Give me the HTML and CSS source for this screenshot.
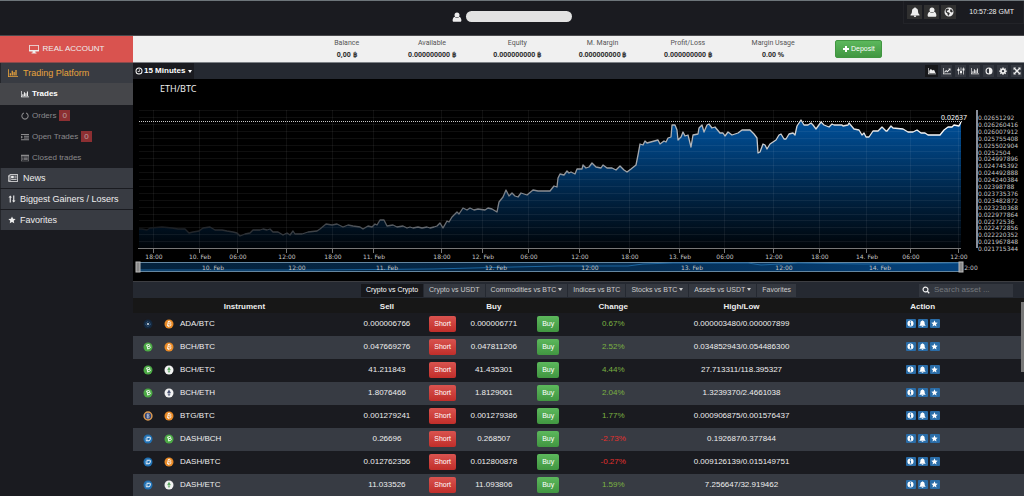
FILE: index.html
```html
<!DOCTYPE html>
<html lang="en">
<head>
  <meta charset="UTF-8">
  <meta name="viewport" content="width=device-width, initial-scale=1">
  <title>Trading Platform</title>
  <link rel="stylesheet" href="styles.css">
</head>
<body>
  <!-- Icons -->
  <svg class="sprite" aria-hidden="true">
    <symbol id="i-user" viewBox="0 0 16 16"><circle cx="8" cy="4.6" r="4"/><path d="M4.3 7.6C2 8.6 1 10.500 1 13.500c0 1.300.8 2 2 2h10c1.200 0 2-.7 2-2 0-3-1-4.900-3.300-5.900a5 5 0 0 1-7.400 0z"/></symbol>
    <symbol id="i-bell" viewBox="0 0 16 16"><path d="M8 .5c.7 0 1.100.5 1.100 1.200 2.400.5 3.700 2.400 3.700 4.800 0 3.400.9 4.700 2.400 6v.9H.8v-.9c1.500-1.300 2.400-2.600 2.400-6 0-2.400 1.300-4.300 3.700-4.800C6.900 1 7.300.5 8 .5zM6 14h4a2 2 0 0 1-4 0z"/></symbol>
    <symbol id="i-globe" viewBox="0 0 16 16"><path fill-rule="evenodd" d="M8 .8a7.200 7.200 0 1 0 0 14.400A7.200 7.200 0 0 0 8 .8zM3 3.600l3-1.300 2 .7-1 2-2.500 1 .6 1.800 3 .8 1.200 1.800-2 3.400-1.300-.5-.5-3-2.600-2L2.500 5zM10.500 3l2.300 1.200 1.300 3.300-1.600 1.300-2.400-1.300-.4-2z"/></symbol>
    <symbol id="i-desktop" viewBox="0 0 16 16"><path fill-rule="evenodd" d="M1 1.500h14c.6 0 1 .4 1 1v8.500c0 .6-.4 1-1 1h-5l.5 2H12v1H4v-1h1.500l.5-2H1c-.6 0-1-.4-1-1V2.500c0-.6.4-1 1-1zm.3 1.300v6.700h13.400V2.800z"/></symbol>
    <symbol id="i-bars" viewBox="0 0 16 16"><path d="M0 2h1.300v11H16v1.300H0zM2.800 8.500h2V12h-2zM5.800 4.500h2V12h-2zM8.800 6.500h2V12h-2zM11.800 3h2v9h-2z"/></symbol>
    <symbol id="i-area" viewBox="0 0 16 16"><path d="M0 2h1.300v11H16v1.300H0zM2.500 12V7.500L5.500 4l4 3 2.500-1.500 3 6.500z"/></symbol>
    <symbol id="i-line" viewBox="0 0 16 16"><path d="M0 2h1.300v11H16v1.300H0zM2.300 9.800l4-4 2.300 2.200 3.400-3.500-1.300-1.300H15v4.300l-1.400-1.300L8.600 11 6.300 8.700l-2.600 2.600z"/></symbol>
    <symbol id="i-candles" viewBox="0 0 16 16"><path d="M2.300 1h1.400v3H5v4H3.700v7H2.300V8H1V4h1.300zM7.300 1h1.400v7H10v4H8.700v3H7.300v-3H6V8h1.300zM12.300 1h1.400v2H15v4h-1.300v8h-1.400V7H11V3h1.300z"/></symbol>
    <symbol id="i-adjust" viewBox="0 0 16 16"><path fill-rule="evenodd" d="M8 1a7 7 0 1 0 0 14A7 7 0 0 0 8 1zm0 2.200v9.600a4.800 4.800 0 0 1 0-9.600z"/></symbol>
    <symbol id="i-gear" viewBox="0 0 16 16"><path fill-rule="evenodd" d="M6.800 1h2.400l.4 2 1.200.5 1.700-1.200 1.700 1.700L13 5.700l.5 1.100 2 .4v2.200l-2 .4-.5 1.200 1.200 1.700-1.700 1.700-1.700-1.200-1.200.5-.4 2H6.800l-.4-2-1.200-.5-1.700 1.200-1.700-1.700L3 11l-.5-1.200-2-.4V7.200l2-.4L3 5.700 1.800 4l1.700-1.700 1.700 1.200L6.400 3zM8 5.800a2.400 2.400 0 1 0 0 4.800 2.400 2.400 0 0 0 0-4.800z"/></symbol>
    <symbol id="i-expand" viewBox="0 0 16 16"><path d="M1 1h5L4.500 2.500 8 6l3.500-3.500L10 1h5v5l-1.500-1.500L10 8l3.500 3.500L15 10v5h-5l1.500-1.500L8 10l-3.500 3.500L6 15H1v-5l1.500 1.500L6 8 2.500 4.500 1 6z"/></symbol>
    <symbol id="i-notch" viewBox="0 0 16 16"><path d="M6 1v2.200a5.200 5.200 0 1 0 4 0V1a7.300 7.300 0 1 1-4 0z"/></symbol>
    <symbol id="i-indent" viewBox="0 0 16 16"><path d="M0 2h16v2H0zM6 5.500h10v2H6zM6 9h10v2H6zM0 12.500h16v2H0zM0 5l4 3.200-4 3.300z"/></symbol>
    <symbol id="i-list" viewBox="0 0 16 16"><path fill-rule="evenodd" d="M0 1.500h16v13H0zM1.200 4.500v8.800h13.600V4.500zM2.500 5.500H4v1.500H2.500zM5 5.500h8.500v1.500H5zM2.500 8H4v1.500H2.500zM5 8h8.500v1.500H5zM2.500 10.500H4V12H2.500zM5 10.500h8.500V12H5z"/></symbol>
    <symbol id="i-news" viewBox="0 0 16 16"><path fill-rule="evenodd" d="M2.500 2H16v12H1.500C.6 14 0 13.400 0 12.500V4h2.500zM1 5v7.300h1.500V5zM3.800 3.300v9.400h11V3.300zM5 4.500h4.200v4H5zM10.200 4.500h3.600v1.200h-3.600zM10.200 7.200h3.600v1.200h-3.600zM5 10h8.800v1.300H5z"/></symbol>
    <symbol id="i-updown" viewBox="0 0 16 16"><path d="M4.500 1L8 5H5.600v10H3.400V5H1zM10.400 1h2.200v10H15l-3.500 4L8 11h2.400z"/></symbol>
    <symbol id="i-star" viewBox="0 0 16 16"><path d="M8 .8l2.200 4.700 5.100.6-3.800 3.500 1 5.100L8 12.200l-4.500 2.500 1-5.100L.7 6.100l5.100-.6z"/></symbol>
    <symbol id="i-clock" viewBox="0 0 16 16"><path fill-rule="evenodd" d="M8 1a7 7 0 1 0 0 14A7 7 0 0 0 8 1zm0 2a5 5 0 1 1 0 10A5 5 0 0 1 8 3zm-.2 1.500h1.500v4.800H5.500V7.800h2.300z"/></symbol>
    <symbol id="i-plus" viewBox="0 0 16 16"><path d="M6 2h4v4h4v4h-4v4H6v-4H2V6h4z"/></symbol>
    <symbol id="i-search" viewBox="0 0 16 16"><path fill-rule="evenodd" d="M7 1a6 6 0 1 0 3.300 11l3.200 3.300 1.900-1.900-3.300-3.200A6 6 0 0 0 7 1zm0 2.300a3.700 3.700 0 1 1 0 7.400 3.700 3.700 0 0 1 0-7.400z"/></symbol>
    <symbol id="i-info" viewBox="0 0 16 16"><path fill-rule="evenodd" d="M8 1a7 7 0 1 0 0 14A7 7 0 0 0 8 1zM6.900 3h2.300v2H6.900zM6 6.300h3.200v4.900H10v1.500H6v-1.500h.9V7.800H6z"/></symbol>
    <!-- Coins -->
    <symbol id="c-ada" viewBox="0 0 20 20"><circle cx="10" cy="10" r="9" fill="#14283f"/><circle cx="10" cy="10" r="4.500" fill="none" stroke="#3d6c9c" stroke-width="2" stroke-dasharray="2 1.500"/><circle cx="10" cy="10" r="2.200" fill="#c9d6e2"/></symbol>
    <symbol id="c-btc" viewBox="0 0 20 20"><circle cx="10" cy="10" r="9" fill="#e98a26"/><path d="M8 5l4.500 1c2 .6 1.800 3.200.3 3.700 1.600.8 1.400 4.300-1.300 4.300L6.500 13M8.700 5l-1.900 8.500M8.300 9.300l4 .6M10.500 3.500l-.4 2M9 13.500l-.4 2.300" fill="none" stroke="#fff" stroke-width="1.700"/></symbol>
    <symbol id="c-bch" viewBox="0 0 20 20"><circle cx="10" cy="10" r="9" fill="#4caa45"/><path d="M6.500 6.500L11 5c2.300-.5 3 2 1.600 3.500 2.300-.2 2.900 3 .6 4.200L8.700 14M7.500 6l2.200 8M8.700 9.800l4-1.200" fill="none" stroke="#fff" stroke-width="1.800"/></symbol>
    <symbol id="c-etc" viewBox="0 0 20 20"><circle cx="10" cy="10" r="9" fill="#f2f2f2"/><path d="M10 3.500l3.500 6-3.500 2-3.500-2zM6.800 11.200l3.200 2 3.200-2-3.200 5z" fill="#5aa55f"/></symbol>
    <symbol id="c-eth" viewBox="0 0 20 20"><circle cx="10" cy="10" r="9" fill="#f2f2f2"/><path d="M10 3l3.800 6.600-3.800 2.100-3.800-2.100zM6.500 11.200l3.500 2 3.500-2-3.500 5.300z" fill="#4b5575"/></symbol>
    <symbol id="c-btg" viewBox="0 0 20 20"><circle cx="10" cy="10" r="7.800" fill="#2d4378" stroke="#dc9a4f" stroke-width="3"/><path d="M8.500 6h2c2 0 2.100 3 .4 3.700 2.200.5 1.900 4.300-.5 4.300H8.500V6M8.500 9.800h2.500" fill="none" stroke="#d9dbe3" stroke-width="1.500"/></symbol>
    <symbol id="c-dash" viewBox="0 0 20 20"><circle cx="10" cy="10" r="9" fill="#2071b4"/><path d="M7 6.500h6.500c1.200 0 1.400.8 1.200 1.700l-.8 3.600c-.3 1.200-.9 1.700-2 1.700H5.500M5 10h4.500" fill="none" stroke="#fff" stroke-width="2"/></symbol>
  </svg>

  <header class="topbar">
    <div class="account">
      <svg class="icon icon-lg"><use href="#i-user"/></svg>
      <span class="account-name"></span>
    </div>
    <div class="topbar-tools">
      <button class="tool-btn" aria-label="Alerts"><svg class="icon icon-lg"><use href="#i-bell"/></svg></button>
      <button class="tool-btn" aria-label="Profile"><svg class="icon icon-lg"><use href="#i-user"/></svg></button>
      <button class="tool-btn" aria-label="Language"><svg class="icon icon-lg"><use href="#i-globe"/></svg></button>
      <span class="clock">10:57:28 GMT</span>
    </div>
  </header>

  <div class="layout">
    <nav class="sidebar">
      <a class="real-account" href="#"><svg class="icon icon-lg"><use href="#i-desktop"/></svg>REAL ACCOUNT</a>
      <a class="menu-item current" href="#"><svg class="icon icon-lg"><use href="#i-bars"/></svg>Trading Platform</a>
      <div class="submenu">
        <a class="active" href="#"><svg class="icon"><use href="#i-bars"/></svg>Trades</a>
        <a href="#"><svg class="icon"><use href="#i-notch"/></svg>Orders <span class="badge">0</span></a>
        <a href="#"><svg class="icon"><use href="#i-indent"/></svg>Open Trades <span class="badge">0</span></a>
        <a href="#"><svg class="icon"><use href="#i-list"/></svg>Closed trades</a>
      </div>
      <a class="menu-item" href="#"><svg class="icon icon-lg"><use href="#i-news"/></svg>News</a>
      <a class="menu-item tight" href="#"><svg class="icon"><use href="#i-updown"/></svg>Biggest Gainers / Losers</a>
      <a class="menu-item tight" href="#"><svg class="icon"><use href="#i-star"/></svg>Favorites</a>
    </nav>

    <main class="content">
      <section class="stats">
        <div class="stats-grid">
          <div class="stat"><span>Balance</span><b>0,00 ฿</b></div>
          <div class="stat"><span>Available</span><b>0.000000000 ฿</b></div>
          <div class="stat"><span>Equity</span><b>0.000000000 ฿</b></div>
          <div class="stat"><span>M. Margin</span><b>0.000000000 ฿</b></div>
          <div class="stat"><span>Profit/Loss</span><b>0.000000000 ฿</b></div>
          <div class="stat"><span>Margin Usage</span><b>0.00 %</b></div>
          <div class="stat"><button class="deposit"><svg class="icon"><use href="#i-plus"/></svg>Deposit</button></div>
        </div>
      </section>

      <div class="chart-bar">
        <button class="interval"><svg class="icon"><use href="#i-clock"/></svg>15 Minutes<i class="caret"></i></button>
        <div class="chart-tools">
          <button class="active" aria-label="Area"><svg class="icon"><use href="#i-area"/></svg></button>
          <button aria-label="Line"><svg class="icon"><use href="#i-line"/></svg></button>
          <button aria-label="Candles"><svg class="icon"><use href="#i-candles"/></svg></button>
          <button aria-label="Bars"><svg class="icon"><use href="#i-bars"/></svg></button>
          <button aria-label="Theme"><svg class="icon"><use href="#i-adjust"/></svg></button>
          <button aria-label="Settings"><svg class="icon"><use href="#i-gear"/></svg></button>
          <button aria-label="Full screen"><svg class="icon"><use href="#i-expand"/></svg></button>
        </div>
      </div>

      <svg class="chart" viewBox="0 0 891 202">
        <defs>
          <linearGradient id="fill" gradientUnits="userSpaceOnUse" x1="0" y1="42" x2="0" y2="169">
            <stop offset="0" stop-color="#00509a"/>
            <stop offset="1" stop-color="#000408"/>
          </linearGradient>
          <linearGradient id="stroke" gradientUnits="userSpaceOnUse" x1="6" y1="0" x2="828" y2="0">
            <stop offset="0" stop-color="#14181d"/>
            <stop offset=".2" stop-color="#3c4045"/>
            <stop offset=".5" stop-color="#8c9096"/>
            <stop offset="1" stop-color="#fff"/>
          </linearGradient>
          <linearGradient id="nav" x1="0" y1="0" x2="1" y2="0">
            <stop offset="0" stop-color="#04223d"/>
            <stop offset=".5" stop-color="#052848"/>
            <stop offset="1" stop-color="#04427c"/>
          </linearGradient>
        </defs>
        <text class="chart-title" x="27" y="13">ETH/BTC</text>
        <path class="area" id="area"/>
        <path class="grid" id="grid"/>
        <path class="line" id="line"/>
        <path class="price-line" d="M6 42.500H829"/>
        <text class="price-label" x="834" y="41" text-anchor="end">0.02637</text>
        <path class="axis" d="M5 169.500H828"/>
        <path class="axis-y" d="M844 31V169"/>
        <g id="ticks"></g>
        <g id="prices"></g>
        <!-- Navigator -->
        <rect x="5" y="183.500" width="823" height="9" fill="url(#nav)" stroke="#6486a0"/>
        <path class="nav-line" d="M5 191L180 191 300 190 380 188 425 187 495 187 510 185 540 184 615 184 628 186 665 184 730 185 828 184"/>
        <g id="nav-labels"></g>
        <rect class="handle" x="3" y="183" width="4" height="10"/>
        <rect class="handle" x="826" y="183" width="4" height="10"/>
      </svg>

      <section class="market">
        <div class="market-bar">
          <div class="tabs">
            <button class="active">Crypto vs Crypto</button>
            <button>Crypto vs USDT</button>
            <button>Commodities vs BTC<i class="caret"></i></button>
            <button>Indices vs BTC</button>
            <button>Stocks vs BTC<i class="caret"></i></button>
            <button>Assets vs USDT<i class="caret"></i></button>
            <button>Favorites</button>
          </div>
          <label class="search">
            <svg class="icon"><use href="#i-search"/></svg>
            <input type="text" placeholder="Search asset ..." aria-label="Search asset">
          </label>
        </div>
        <div class="table-wrap">
          <table class="assets">
            <colgroup>
              <col class="w-name"><col class="w-sell"><col class="w-short"><col class="w-price">
              <col class="w-buy"><col class="w-change"><col class="w-range"><col>
            </colgroup>
            <thead>
              <tr><th>Instrument</th><th>Sell</th><th></th><th>Buy</th><th></th><th>Change</th><th>High/Low</th><th>Action</th></tr>
            </thead>
            <tbody id="rows"></tbody>
          </table>
          <div class="scroll-thumb"></div>
        </div>
      </section>
    </main>
  </div>

  <script src="app.js"></script>
</body>
</html>
```

FILE: styles.css
```css
* {
  box-sizing: border-box;
}

body {
  margin: 0;
  height: 100vh;
  display: flex;
  flex-direction: column;
  overflow: hidden;
  background: #1a1b20;
  color: #eee;
  font-family: "Liberation Sans", Arial, sans-serif;
  font-size: 8px;
  line-height: 10px;
}

a {
  color: inherit;
  text-decoration: none;
}

button,
input {
  margin: 0;
  padding: 0;
  border: 0;
  color: inherit;
  font: inherit;
}

.sprite {
  position: absolute;
  width: 0;
  height: 0;
}

.icon {
  width: 8px;
  height: 8px;
  fill: currentColor;
  flex: none;
}

.icon-lg {
  width: 10px;
  height: 10px;
}

.caret {
  display: inline-block;
  margin-left: 2px;
  border: 2px solid transparent;
  border-top: 3px solid currentColor;
  border-bottom: 0;
}

/* Header */
.topbar {
  display: grid;
  grid-template-columns: 1fr auto 1fr;
  height: 36px;
  border-top: 1px solid #6d757a;
  border-bottom: 1px solid #4a4a4d;
}

.account {
  grid-column: 2;
  display: flex;
  align-items: center;
  gap: 4px;
  padding-bottom: 3px;
}

.account-name {
  width: 106px;
  height: 11px;
  border-radius: 6px;
  background: #e2e2e2;
}

.topbar-tools {
  justify-self: end;
  display: flex;
  align-items: center;
  gap: 2px;
  height: 23px;
  padding: 0 9px 0 3px;
  border: 1px solid #222328;
  border-top: 0;
}

.tool-btn {
  display: flex;
  align-items: center;
  justify-content: center;
  width: 15px;
  height: 14px;
  background: #303030;
}

.clock {
  margin-left: 11px;
  font-size: 7px;
}

.layout {
  flex: 1;
  display: flex;
  min-height: 0;
}

/* Sidebar */
.sidebar {
  width: 133px;
  flex: none;
}

.real-account {
  display: flex;
  align-items: center;
  justify-content: center;
  gap: 4px;
  height: 27px;
  background: #d9534f;
  border-bottom: 1px solid #8a4a4c;
}

.menu-item {
  display: flex;
  align-items: center;
  gap: 5px;
  height: 20px;
  margin-bottom: 1px;
  padding-left: 7px;
  background: #383b42;
  border-left: 1px solid #24262b;
  font-size: 9px;
}

.menu-item.tight {
  gap: 4px;
}

.menu-item.current {
  margin-bottom: 0;
  color: #e8a33d;
}

.submenu a {
  display: flex;
  align-items: center;
  gap: 3px;
  height: 21px;
  padding-left: 21px;
  color: #8a8a8c;
}

.submenu a.active {
  height: 22px;
  background: #45464a;
  color: #fff;
  font-weight: bold;
}

.badge {
  padding: 0 3px;
  background: #8c2f32;
  color: #b9a0a0;
  line-height: 11px;
}

.content {
  flex: 1;
  min-width: 0;
  display: flex;
  flex-direction: column;
}

/* Account stats */
.stats {
  height: 27px;
  flex: none;
  background: #f0f0f0;
  border-bottom: 1px solid #7d8186;
  color: #555;
}

.stats-grid {
  display: grid;
  grid-template-columns: repeat(7, 1fr);
  width: 67%;
  height: 25px;
  margin-left: 19.2%;
}

.stat {
  display: flex;
  flex-direction: column;
  align-items: center;
  justify-content: center;
  gap: 2px;
  white-space: nowrap;
  font-family: Roboto, sans-serif;
  font-size: 7px;
}

.stat b {
  color: #333;
  font-family: "Noto Sans", sans-serif;
}

.deposit {
  display: flex;
  align-items: center;
  gap: 1px;
  height: 18px;
  padding: 0 6px;
  border: 1px solid #419641;
  border-radius: 2px;
  background: linear-gradient(#5cb85c, #419641);
  color: #fff;
  font-family: "Liberation Sans", Arial, sans-serif;
}

/* Chart */
.chart-bar {
  display: flex;
  justify-content: space-between;
  height: 16px;
  flex: none;
  padding-right: 2px;
  background: #252931;
}

.interval {
  display: flex;
  align-items: center;
  gap: 1px;
  padding: 0 2px;
  background: #1a1b20;
  color: #fff;
  font-weight: bold;
}

.chart-tools {
  display: flex;
  align-items: center;
  gap: 3px;
}

.chart-tools button {
  display: flex;
  align-items: center;
  justify-content: center;
  width: 11px;
  height: 12px;
  background: #33373f;
}

.chart-tools .active {
  width: 13px;
  background: #17181b;
}

.chart {
  display: block;
  width: 100%;
  height: auto;
  flex: none;
  background: #000;
  font-family: "DejaVu Sans", sans-serif;
  font-size: 6px;
  fill: #c4c4c4;
}

.chart-title {
  fill: #eee;
  font-family: "Noto Sans", sans-serif;
  font-size: 9px;
}

.area {
  fill: url(#fill);
}

.grid {
  fill: none;
  stroke: rgba(255, 255, 255, 0.06);
}

.line {
  fill: none;
  stroke: url(#stroke);
  stroke-width: 1.3;
  stroke-linejoin: round;
}

.price-line {
  stroke: #c8c8c8;
  stroke-dasharray: 1 1;
}

.price-label {
  fill: #fff;
  font-family: "Noto Sans", sans-serif;
  font-size: 7px;
}

.axis {
  stroke: #777;
}

.axis-y {
  stroke: #8a8f9a;
  stroke-width: 2;
}

.nav-line {
  fill: none;
  stroke: #1c659f;
}

.handle {
  fill: #888;
  stroke: #bbb;
}

/* Market */
.market {
  flex: 1;
  min-height: 0;
  display: flex;
  flex-direction: column;
}

.market-bar {
  display: grid;
  grid-template-columns: 1fr auto 1fr;
  align-items: center;
  height: 17px;
  flex: none;
  padding-right: 11px;
  padding-left: 11px;
  background: #252931;
  border-top: 1px solid #3d3e42;
}

.tabs {
  grid-column: 2;
  display: flex;
  gap: 1px;
}

.tabs button {
  height: 13px;
  padding: 0 5px;
  background: #343840;
  color: #ccc;
  font-size: 7px;
  white-space: nowrap;
}

.tabs .caret {
  vertical-align: 1px;
}

.tabs .active {
  background: #17181c;
  color: #fff;
}

.search {
  justify-self: end;
  display: flex;
  align-items: center;
  gap: 4px;
  width: 94px;
  height: 13px;
  padding-left: 3px;
  background: #33373f;
}

.search input {
  width: 100%;
  min-width: 0;
  background: none;
  outline: none;
}

.search input::placeholder {
  color: #74777d;
}

.table-wrap {
  position: relative;
  flex: 1;
  min-height: 0;
  overflow: hidden;
}

.assets {
  width: 100%;
  table-layout: fixed;
  border-collapse: collapse;
  text-align: center;
}

.w-name { width: 25%; }
.w-sell { width: 7%; }
.w-short { width: 5.5%; }
.w-price { width: 6%; }
.w-buy { width: 6.2%; }
.w-change { width: 8.4%; }
.w-range { width: 20.4%; }

.assets th {
  height: 15px;
  padding: 2px 0 0;
  background: #171717;
}

.assets td {
  height: 23px;
  padding: 0 0 2px;
}

.assets tr > :last-child {
  padding-right: 11px;
}

.assets tbody tr:nth-child(even) {
  background: #373b43;
}

.pair {
  display: flex;
  align-items: center;
  gap: 6px;
  padding-left: 10px;
}

.coin {
  width: 10px;
  height: 10px;
}

.coin:first-child {
  margin-right: 5px;
}

.up {
  color: #7bb342;
}

.down {
  color: #e5302d;
}

.trade {
  height: 16px;
  padding: 0 5px;
  border-radius: 2px;
  color: #fff;
  font-size: 7px;
}

.trade.short {
  background: linear-gradient(#d9534f, #c12e2a);
}

.trade.buy {
  background: linear-gradient(#5cb85c, #419641);
}

.actions {
  display: flex;
  justify-content: center;
  gap: 2px;
}

.actions button {
  display: flex;
  align-items: center;
  justify-content: center;
  width: 10px;
  height: 9px;
  border-radius: 1px;
  background: #2a6da8;
  color: #fff;
}

.actions .icon {
  width: 7px;
  height: 7px;
}

.scroll-thumb {
  position: absolute;
  top: 4px;
  right: 0;
  width: 3px;
  height: 70px;
  background: #777;
}
```

FILE: app.js
```js
const ASSETS = [
  ['ADA', 'BTC', '0.000006766', '0.000006771', '0.67%', '0.000003480/0.000007899'],
  ['BCH', 'BTC', '0.047669276', '0.047811206', '2.52%', '0.034852943/0.054486300'],
  ['BCH', 'ETC', '41.211843', '41.435301', '4.44%', '27.713311/118.395327'],
  ['BCH', 'ETH', '1.8076466', '1.8129061', '2.04%', '1.3239370/2.4661038'],
  ['BTG', 'BTC', '0.001279241', '0.001279386', '1.77%', '0.000906875/0.001576437'],
  ['DASH', 'BCH', '0.26696', '0.268507', '-2.73%', '0.192687/0.377844'],
  ['DASH', 'BTC', '0.012762356', '0.012800878', '-0.27%', '0.009126139/0.015149751'],
  ['DASH', 'ETC', '11.033526', '11.093806', '1.59%', '7.256647/32.919462']
];

const PRICES = [
  '0.02651292', '0.026260416', '0.026007912', '0.025755408', '0.025502904',
  '0.0252504', '0.024997896', '0.024745392', '0.024492888', '0.024240384',
  '0.02398788', '0.023735376', '0.023482872', '0.023230368', '0.022977864',
  '0.02272536', '0.022472856', '0.022220352', '0.021967848', '0.021715344'
];

const TICKS = [
  [20, '18:00'], [66, '10. Feb'], [104, '06:00'], [153, '12:00'], [199, '18:00'],
  [240, '11. Feb'], [308, '18:00'], [349, '12. Feb'], [395, '06:00'], [446, '12:00'],
  [496, '18:00'], [546, '13. Feb'], [591, '06:00'], [640, '12:00'], [686, '18:00'],
  [733, '14. Feb'], [777, '06:00'], [825, '12:00']
];

const NAV_TICKS = [
  [80, '10. Feb'], [164, '12:00'], [254, '11. Feb'], [363, '12. Feb'], [457, '12:00'],
  [559, '13. Feb'], [651, '12:00'], [747, '14. Feb'], [838, '2:00']
];

const SERIES = `6,150 9,150 14,151 17,149 29,148 39,149 45,150 52,150 56,154 60,153 66,152 70,149 77,148
82,151 89,151 94,152 100,153 104,154 107,157 112,155 117,154 120,151 127,151 130,150 134,151 137,150
140,153 145,153 150,156 154,154 157,156 160,152 162,155 169,155 175,153 184,152 187,150 193,145 199,146
204,145 210,148 215,146 220,147 227,148 230,150 235,147 239,148 242,145 244,146 247,141 251,141 254,147
260,146 264,148 270,147 274,149 277,148 280,149 285,148 289,149 294,148 297,149 301,148 304,147 307,144
310,149 314,142 316,143 319,138 324,133 326,135 330,129 334,131 337,129 341,131 345,130 352,131 355,129
359,130 364,133 366,123 370,118 373,111 376,117 379,114 382,117 385,118 388,114 394,116 400,111 405,112
417,112 421,107 424,108 425,99 427,95 431,96 434,92 436,94 438,93 442,95 444,90 449,90 450,86 453,89
456,88 459,84 463,88 468,89 470,86 474,89 479,89 483,91 487,87 491,91 494,93 498,90 503,86 505,76 507,65
510,66 512,62 514,64 525,61 527,65 531,62 533,63 535,59 538,58 539,46 542,46 544,51 545,61 548,58 550,53
552,57 555,56 558,68 560,56 565,55 566,49 569,46 571,53 574,46 576,45 579,49 582,48 587,54 590,54 592,57
595,53 599,56 605,54 609,51 617,51 621,55 624,59 625,74 627,73 630,65 632,66 634,70 637,65 643,61 646,56
648,55 651,60 653,60 656,55 660,54 662,56 664,47 668,41 671,46 675,46 678,44 680,46 683,50 688,43 691,46
696,48 699,45 701,46 709,46 710,47 715,46 716,44 721,50 726,51 729,56 731,54 733,58 736,58 740,52 745,52
749,48 750,49 753,52 754,52 758,47 760,49 770,50 775,53 780,53 784,51 788,54 792,54 795,56 807,56 811,51
815,48 819,48 821,46 826,47 828,43`;

const byId = id => document.getElementById(id);
const icon = name => `<svg class="icon"><use href="#i-${name}"/></svg>`;
const coin = name => `<svg class="coin"><use href="#c-${name.toLowerCase()}"/></svg>`;
const label = (x, y, text, anchor) => `<text x="${x}" y="${y}" text-anchor="${anchor}">${text}</text>`;

function drawChart() {
  const points = SERIES.split(/\s+/).join(' L');
  byId('line').setAttribute('d', `M${points}`);
  byId('area').setAttribute('d', `M6,169 L${points} V169 Z`);

  let grid = '';
  for (let i = 0; i < 20; i++) {
    grid += `M6 ${Math.round(31 + i * 6.9) + 0.5}H828`;
  }
  TICKS.forEach(([x]) => grid += `M${x + 0.5} 31V169`);
  byId('grid').setAttribute('d', grid);

  byId('ticks').innerHTML = TICKS.map(([x, text]) =>
    `<path class="axis" d="M${x + 0.5} 169v5"/>` + label(x + 1, 180, text, 'middle')).join('');
  byId('prices').innerHTML = PRICES.map((text, i) =>
    label(845, Math.round(41 + i * 6.9), text, 'start')).join('');
  byId('nav-labels').innerHTML = NAV_TICKS.map(([x, text]) => label(x, 191, text, 'middle')).join('');
}

function drawRows() {
  byId('rows').innerHTML = ASSETS.map(([base, quote, sell, buy, change, range]) => `
    <tr>
      <td><div class="pair">${coin(base)}${coin(quote)}<span>${base}/${quote}</span></div></td>
      <td>${sell}</td>
      <td><button class="trade short">Short</button></td>
      <td>${buy}</td>
      <td><button class="trade buy">Buy</button></td>
      <td class="${change[0] === '-' ? 'down' : 'up'}">${change}</td>
      <td>${range}</td>
      <td><div class="actions">
        <button aria-label="Info">${icon('info')}</button>
        <button aria-label="Alert">${icon('bell')}</button>
        <button aria-label="Favorite">${icon('star')}</button>
      </div></td>
    </tr>`).join('');
}

drawChart();
drawRows();
```
